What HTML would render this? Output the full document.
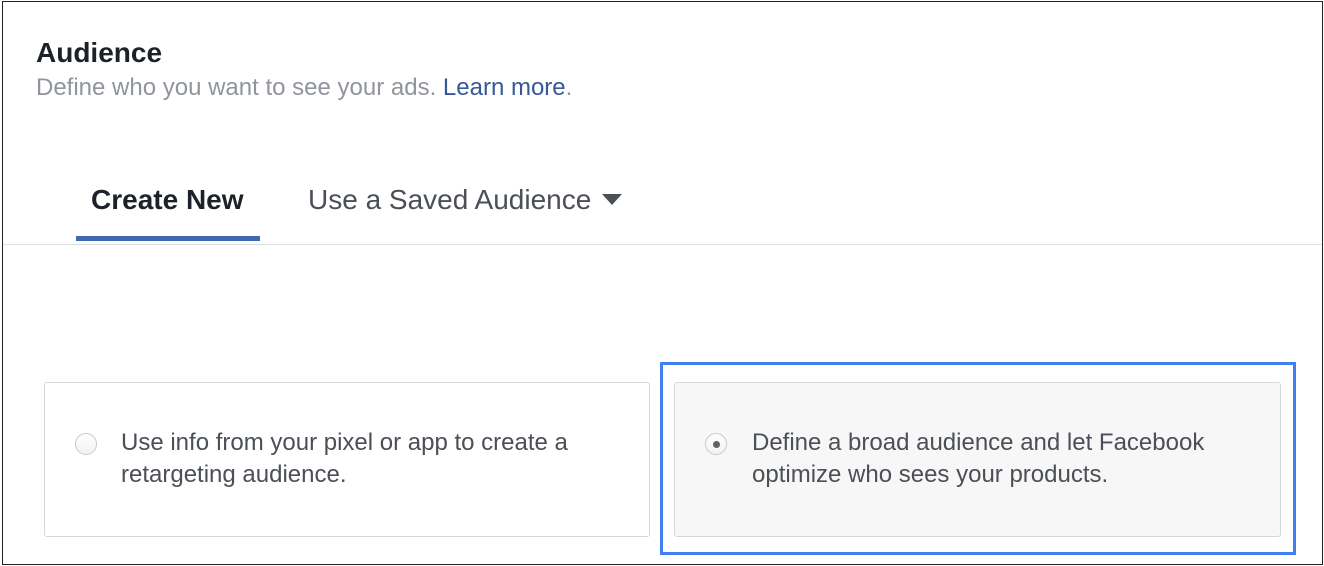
<!DOCTYPE html>
<html><head><style>
body{margin:0;width:1324px;height:566px;background:#fff;font-family:"Liberation Sans",Arial,sans-serif;position:relative;overflow:hidden}
.frame{position:absolute;left:2px;top:1px;width:1319px;height:562px;border:1px solid #222;box-sizing:content-box}
.a{position:absolute;white-space:nowrap}
.card{position:absolute;border:1px solid #d5d7db;border-radius:3px;box-sizing:border-box}
.radio{position:absolute;width:22px;height:22px;border-radius:50%;border:1px solid #c8cacd;box-sizing:border-box;background:linear-gradient(#fff,#f2f2f2)}
.ct{position:absolute;font-size:24px;line-height:32px;color:#4b4f56;white-space:nowrap}
</style></head><body>
<div class="frame"></div>
<div class="a" style="left:36px;top:37px;font-size:28px;font-weight:bold;color:#1d2129">Audience</div>
<div class="a" style="left:36px;top:74px;font-size:24px;color:#90949c">Define who you want to see your ads. <span style="color:#365899">Learn more</span>.</div>
<div class="a" style="left:91px;top:184px;font-size:28px;font-weight:bold;color:#1d2129">Create New</div>
<div class="a" style="left:308px;top:184px;font-size:28px;color:#4b4f56">Use a Saved Audience</div>
<div class="a" style="left:602px;top:194px;width:0;height:0;border-left:10px solid transparent;border-right:10px solid transparent;border-top:11px solid #4b4f56"></div>
<div class="a" style="left:76px;top:236px;width:184px;height:5px;background:#4267b2"></div>
<div class="a" style="left:3px;top:244px;width:1319px;height:1px;background:#dddfe2"></div>
<div class="card" style="left:44px;top:382px;width:606px;height:155px;background:#fff"></div>
<div class="radio" style="left:75px;top:433px"></div>
<div class="ct" style="left:121px;top:427px">Use info from your pixel or app to create a<br>retargeting audience.</div>
<div class="a" style="left:660px;top:362px;width:636px;height:193px;border:3px solid #4080f0;box-sizing:border-box"></div>
<div class="card" style="left:674px;top:382px;width:607px;height:155px;background:#f7f7f7"></div>
<div class="radio" style="left:705px;top:433px"><div style="position:absolute;left:7px;top:7px;width:7px;height:7px;border-radius:50%;background:#5d6068"></div></div>
<div class="ct" style="left:752px;top:427px">Define a broad audience and let Facebook<br>optimize who sees your products.</div>
</body></html>
